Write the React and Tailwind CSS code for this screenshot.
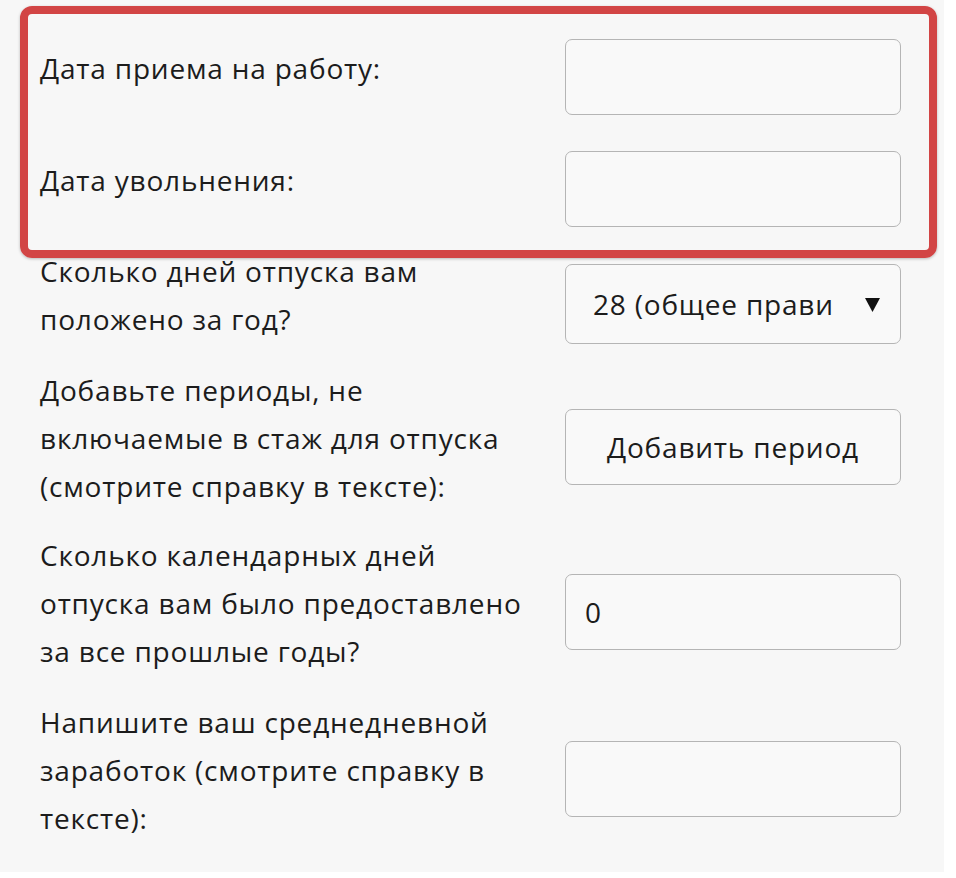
import React from "react";

const rows = [
  { lines: ["Дата приема на работу:"], kind: "input", gap: "" },
  { lines: ["Дата увольнения:"], kind: "input", gap: "mt-[36px]" },
  { lines: ["Сколько дней отпуска вам", "положено за год?"], kind: "select", gap: "mt-[37px]" },
  {
    lines: ["Добавьте периоды, не", "включаемые в стаж для отпуска", "(смотрите справку в тексте):"],
    kind: "button",
    gap: "mt-[40px]",
  },
  {
    lines: ["Сколько календарных дней", "отпуска вам было предоставлено", "за все прошлые годы?"],
    kind: "input",
    value: "0",
    gap: "mt-[39px]",
  },
  {
    lines: ["Напишите ваш среднедневной", "заработок (смотрите справку в", "тексте):"],
    kind: "input",
    gap: "mt-[41px]",
  },
];

function Field({ row }) {
  if (row.kind === "select") {
    return (
      <div className="w-[336px] h-[80px] shrink-0 rounded-[7px] border border-[#b5b5b5] bg-[#f9f9f9] flex items-center pl-[27px] pr-[20px]">
        <span className="whitespace-nowrap">28 (общее прави</span>
        <svg width="15" height="15" viewBox="0 0 15 15" className="ml-auto">
          <path d="M0 1h15L7.5 15z" fill="#111" />
        </svg>
      </div>
    );
  }
  if (row.kind === "button") {
    return (
      <button className="w-[336px] h-[76px] shrink-0 rounded-[7px] border border-[#b5b5b5] bg-[#f9f9f9] text-center">
        Добавить период
      </button>
    );
  }
  return (
    <div className="w-[336px] h-[76px] shrink-0 rounded-[7px] border border-[#b5b5b5] bg-[#f9f9f9] flex items-center pl-[19px]">
      {row.value}
    </div>
  );
}

export default function App() {
  return (
    <div className="bg-white w-[956px] h-[878px]">
      <div
        className="relative bg-[#f7f7f7] w-[944px] h-[872px] pl-[40px] pt-[39px] text-[28px] tracking-[0.8px] text-[#1c1c1c]"
        style={{ fontFamily: "'Open Sans', 'Noto Sans', sans-serif" }}
      >
        {rows.map((row, i) => (
          <div key={i} className={`flex items-center ${row.gap}`}>
            <div className="w-[525px] -mt-[18px] leading-[48px]">
              {row.lines.map((l) => (
                <div key={l} className="whitespace-nowrap">
                  {l}
                </div>
              ))}
            </div>
            <Field row={row} />
          </div>
        ))}

        {/* red annotation frame */}
        <div className="absolute left-[20px] top-[6px] w-[917px] h-[252px] border-[8px] border-[#d24545] rounded-[12px] pointer-events-none shadow-[0_1px_3px_rgba(0,0,0,0.25)]" />
      </div>
    </div>
  );
}
